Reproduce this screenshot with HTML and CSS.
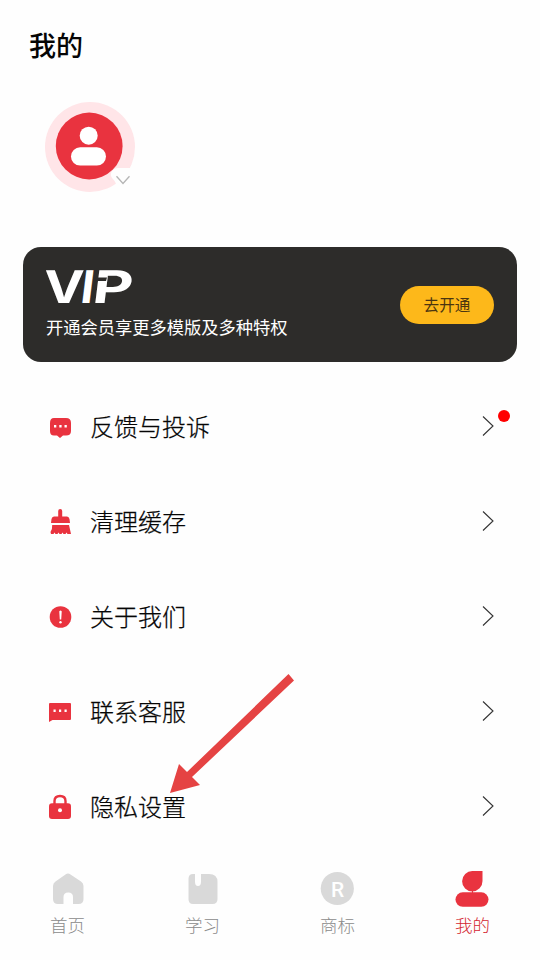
FILE: index.html
```html
<!DOCTYPE html>
<html lang="zh-CN">
<head>
<meta charset="utf-8">
<title>我的</title>
<link rel="stylesheet" href="styles.css">
</head>
<body>
<main class="screen">
  <header class="header"><h1 class="title">我的</h1></header>
  <section class="profile">
    <svg class="avatar" viewBox="0 0 90 90">
      <circle cx="45" cy="45" r="45" fill="#ffe5e8"/>
      <path d="M92 66H73C69 66 65 70 66 74C67 77 70 78 71 82L78 92H92Z" fill="#fefefe"/>
      <circle cx="44.2" cy="44" r="33.4" fill="#e9333f"/>
      <circle cx="43.7" cy="33.7" r="9" fill="#fff"/>
      <rect x="26" y="45.2" width="35" height="18.4" rx="9.2" fill="#fff"/>
      <path d="M71.5 74.3L78 81.5L84.5 74.3" fill="none" stroke="#b5b5b5" stroke-width="1.3"/>
    </svg>
  </section>
  <section class="vip">
    <div class="vip-info">
      <svg class="vip-logo" viewBox="0 0 90 36">
        <g fill="#fff" font-family="Inter, sans-serif" font-weight="700" font-size="45">
          <text transform="translate(-2.500 34.500) skewX(-2) scale(1.200 1)">V</text>
          <text transform="translate(33.300 34.500) skewX(-7) scale(1.050 1)">I</text>
          <text transform="translate(45.300 34.500) skewX(-7) scale(1.370 1)">P</text>
        </g>
        <path d="M49.500 9.500H61L60 13H49Z" fill="#2d2c2a"/>
      </svg>
      <p class="vip-desc">开通会员享更多模版及多种特权</p>
    </div>
    <button class="vip-button">去开通</button>
  </section>
  <ul class="menu">
    <li class="row">
      <svg class="icon" viewBox="0 0 24 28"><path d="M6 5H18Q23 5 23 10V18Q23 22.5 18 22.5H15L12 25L9 22.5H6Q2 22.5 2 18V10Q2 5 6 5Z"/><path class="cut" d="M6 12h2.300v2.600H6zM11.300 12h2.300v2.600h-2.300zM16.500 12h2.300v2.600h-2.300z"/></svg>
      <span class="label">反馈与投诉</span>
      <svg class="arrow" viewBox="0 0 12 22"><path d="M1 1.5L11 11L1 20.5"/></svg>
      <i class="dot"></i>
    </li>
    <li class="row">
      <svg class="icon" viewBox="0 0 24 28"><path d="M10.2 3Q10.2 1 12.2 1Q14.2 1 14.2 3V8.5H19Q21 8.5 21.5 11L22 15H3L3.5 11Q4 8.5 6 8.5H10.2ZM4.2 17H21L23 26H19.5L18.5 24.5L17.5 26H15.5L14.5 24.5L13.5 26H11.5L10.5 24.5L9.5 26H7.5L6.5 24.5L5.5 26H3L2.5 24Q4.5 21 4.2 17Z"/></svg>
      <span class="label">清理缓存</span>
      <svg class="arrow" viewBox="0 0 12 22"><path d="M1 1.5L11 11L1 20.5"/></svg>
    </li>
    <li class="row">
      <svg class="icon" viewBox="0 0 24 28"><circle cx="12.5" cy="14" r="10.8"/><path class="cut" d="M11.3 8.5Q12.5 6.5 13.7 8.5L13.2 16.5H11.8Z"/><circle class="cut" cx="12.5" cy="19.2" r="1.2"/></svg>
      <span class="label">关于我们</span>
      <svg class="arrow" viewBox="0 0 12 22"><path d="M1 1.5L11 11L1 20.5"/></svg>
    </li>
    <li class="row">
      <svg class="icon" viewBox="0 0 24 28"><path d="M2 5H22Q23 5 23 6V21Q23 22 22 22H4.500L1 24V6Q1 5 2 5Z"/><path class="cut" d="M5.500 11.500h2.200v2.400H5.500zM11 11.500h2.200v2.400H11zM16.500 11.500h2.200v2.400h-2.200z"/></svg>
      <span class="label">联系客服</span>
      <svg class="arrow" viewBox="0 0 12 22"><path d="M1 1.500L11 11L1 20.500"/></svg>
    </li>
    <li class="row">
      <svg class="icon" viewBox="0 0 24 28"><path class="shackle" d="M6.500 13V8Q6.500 3 12 3Q17.500 3 17.500 8V13"/><rect x="1" y="10.300" width="22" height="15.700" rx="3"/><circle class="cut" cx="12" cy="17.300" r="2"/></svg>
      <span class="label">隐私设置</span>
      <svg class="arrow" viewBox="0 0 12 22"><path d="M1 1.500L11 11L1 20.500"/></svg>
    </li>
  </ul>
  <nav class="tabs">
    <a class="tab"><svg viewBox="0 0 36 38"><path d="M15.500 4.500Q18 2.500 20.500 4.500L31 11.500Q33.500 13 33.500 16V29Q33.500 34 28.500 34H23V27Q23 22.500 18.200 22.500Q13.500 22.500 13.500 27V34H8Q3 34 3 29V16Q3 13 5.500 11.500Z"/></svg><span>首页</span></a>
    <a class="tab"><svg viewBox="0 0 36 38"><path d="M8 4H10V11.500Q10 16 13 16Q16 16 16 11.500V4H24Q32.500 4 32.500 12V29Q32.500 34 27.500 34H8Q3.500 34 3.500 29V9Q3.500 4 8 4Z"/></svg><span>学习</span></a>
    <a class="tab"><svg viewBox="0 0 36 38"><circle cx="17.300" cy="18.500" r="16.600"/><text x="17.600" y="26.500" text-anchor="middle" class="mark">R</text></svg><span>商标</span></a>
    <a class="tab active"><svg viewBox="0 0 36 38"><path d="M17.500 1H27.500V11A10.200 10.200 0 1 1 17.500 1Z"/><rect x=".5" y="22.300" width="33" height="14.500" rx="7.250"/><path d="M17 20h1v3h-1z"/></svg><span>我的</span></a>
  </nav>
  <svg class="pointer" viewBox="0 0 126 120"><path d="M120.500 0L126 6.500L24 103L32 111L2 119L11 90L19 98Z"/></svg>
</main>
</body>
</html>
```
FILE: styles.css
```css
* { box-sizing: border-box; }
body {
  margin: 0;
  background: #fefefe;
  color: #050505;
  font-family: "Noto Sans CJK SC", sans-serif;
}
.screen {
  position: relative;
  width: 540px;
  height: 960px;
  overflow: hidden;
  display: flex;
  flex-direction: column;
}
.header { height: 90px; padding: 25px 29px 0; }
.title { margin: 0; font-size: 27px; line-height: 40px; font-weight: 500; }
.profile { height: 157px; padding: 12px 45px; }
.avatar { display: block; width: 90px; height: 90px; }
.vip {
  height: 115px;
  margin: 0 23px;
  padding: 0 23px;
  border-radius: 18px;
  background: #2d2c2a;
  display: flex;
  align-items: center;
  justify-content: space-between;
}
.vip-info { height: 115px; padding-top: 21px; }
.vip-logo { display: block; width: 90px; height: 36px; overflow: visible; }
.vip-desc { margin: 10px 0 0; color: #fff; font-size: 17.25px; line-height: 25px; }
.vip-button {
  width: 94px;
  height: 38px;
  padding: 0 0 2px;
  border: 0;
  border-radius: 19px;
  background: #fdb81a;
  color: #4b3510;
  font: 400 15.6px/36px "Noto Sans CJK SC", sans-serif;
}
.menu { list-style: none; margin: 17px 0 0; padding: 0 46px 0 48px; }
.row { position: relative; height: 95px; display: flex; align-items: center; }
.icon { width: 24px; height: 28px; fill: #e9333f; }
.icon .cut { fill: #fff; }
.icon .shackle { fill: none; stroke: #e9333f; stroke-width: 2.4; }
.label {
  margin-left: 18px;
  padding-bottom: 2px;
  font-size: 24px;
  line-height: 36px;
  font-weight: 300;
  -webkit-text-stroke: .25px currentColor;
}
.arrow { width: 12px; height: 22px; margin: 0 0 1px auto; fill: none; stroke: #333; stroke-width: 1.1; }
.dot { position: absolute; right: -16px; top: 31px; width: 12px; height: 12px; border-radius: 50%; background: #f00; }
.tabs { height: 106px; padding-top: 16px; display: grid; grid-template-columns: repeat(4, 1fr); }
.tab { display: flex; flex-direction: column; align-items: center; color: #8b8b8b; font-size: 17.5px; line-height: 26px; font-weight: 300; }
.tab svg { width: 36px; height: 38px; margin-bottom: 4px; fill: #d9d9d9; }
.tab .mark { fill: #fff; font: 500 21px Roboto, sans-serif; }
.tab.active { color: #d42631; }
.tab.active svg { fill: #e9333f; }
.pointer { position: absolute; left: 168px; top: 674px; width: 126px; height: 120px; fill: #e54343; }
```
